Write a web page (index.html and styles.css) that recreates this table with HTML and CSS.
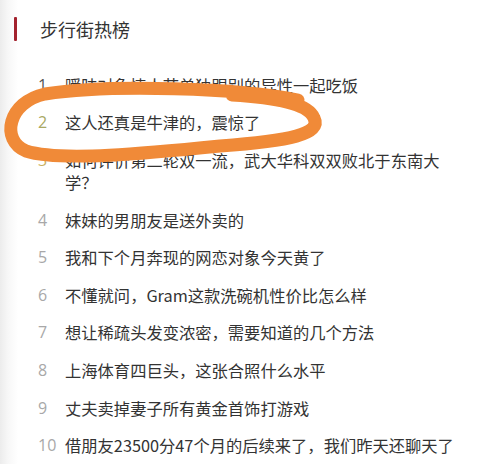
FILE: index.html
```html
<!DOCTYPE html>
<html lang="zh">
<head>
<meta charset="utf-8">
<link rel="stylesheet" href="styles.css">
</head>
<body>
<div class="page">
  <div class="header">
    <span class="bar"></span>
    <h1 class="title">步行街热榜</h1>
  </div>
  <ol class="list">
    <li class="row"><span class="num num-1">1</span><span class="text">暧昧对象情人节单独跟别的异性一起吃饭</span></li>
    <li class="row"><span class="num num-2">2</span><span class="text">这人还真是牛津的，震惊了</span></li>
    <li class="row"><span class="num num-3">3</span><span class="text">如何评价第二轮双一流，武大华科双双败北于东南大学？</span></li>
    <li class="row"><span class="num">4</span><span class="text">妹妹的男朋友是送外卖的</span></li>
    <li class="row"><span class="num">5</span><span class="text">我和下个月奔现的网恋对象今天黄了</span></li>
    <li class="row"><span class="num">6</span><span class="text">不懂就问，Gram这款洗碗机性价比怎么样</span></li>
    <li class="row"><span class="num">7</span><span class="text">想让稀疏头发变浓密，需要知道的几个方法</span></li>
    <li class="row"><span class="num">8</span><span class="text">上海体育四巨头，这张合照什么水平</span></li>
    <li class="row"><span class="num">9</span><span class="text">丈夫卖掉妻子所有黄金首饰打游戏</span></li>
    <li class="row"><span class="num">10</span><span class="text">借朋友23500分47个月的后续来了，我们昨天还聊天了</span></li>
  </ol>
  <svg class="scribble" width="499" height="464" viewBox="0 0 499 464" aria-hidden="true">
    <path d="M 298 100 C 240 88, 110 84, 45 94 C 8 102, 0 140, 26 151 C 60 162, 150 153, 220 146 C 290 141, 322 134, 314 118 C 308 104, 280 98, 232 95" fill="none" stroke="#f08a38" stroke-width="13" stroke-linecap="round" stroke-linejoin="round"/>
  </svg>
</div>
</body>
</html>
```
FILE: styles.css
```css
* { box-sizing: border-box; }
html, body {
  margin: 0;
  padding: 0;
  background: #ffffff;
}
.page {
  position: relative;
  width: 499px;
  height: 464px;
  overflow: hidden;
  padding: 17px 0 0 14px;
  font-family: "Noto Sans CJK SC", "Noto Sans", sans-serif;
  background: linear-gradient(to right, #ececec 0px, #f7f7f7 8px, #ffffff 18px, #ffffff 100%);
}
.header {
  display: flex;
  align-items: center;
  height: 24px;
}
.bar {
  width: 3px;
  height: 24px;
  background: #a3222e;
  border-radius: 1px;
}
.title {
  margin: 0 0 0 23px;
  font-size: 18px;
  font-weight: 400;
  color: #333333;
  line-height: 24px;
}
.list {
  list-style: none;
  margin: 25px 0 0 0;
  padding: 0 0 0 24px;
}
.row {
  display: flex;
  align-items: flex-start;
  padding: 7.8px 0;
  line-height: 22px;
}
.num {
  width: 27px;
  flex: 0 0 27px;
  font-family: "Open Sans", "Noto Sans", sans-serif;
  font-size: 16px;
  color: #a8a8a8;
}
.num-1 { color: #555555; }
.num-2 { color: #a9a862; }
.num-3 { color: #c9b060; }
.text {
  width: 389px;
  font-size: 16.3px;
  color: #333333;
}
.scribble {
  position: absolute;
  left: 0;
  top: 0;
  pointer-events: none;
}
```
